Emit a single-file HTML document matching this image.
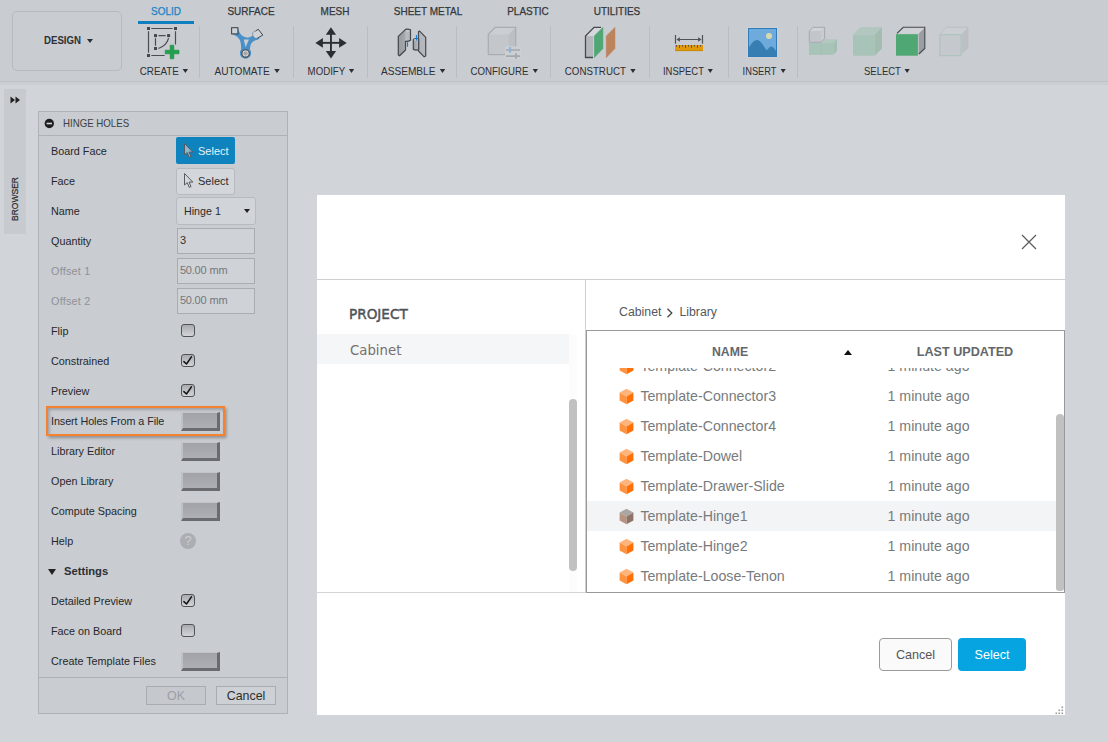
<!DOCTYPE html>
<html lang="en">
<head>
<meta charset="utf-8">
<title>Hinge Holes</title>
<style>
*{box-sizing:border-box;margin:0;padding:0}
html,body{width:1108px;height:742px;overflow:hidden}
body{background:#d1d4d9;font-family:"Liberation Sans",Arial,sans-serif;font-size:12px;color:#2b2b2b;position:relative}
.abs{position:absolute}
/* toolbar */
#toolbar{position:absolute;left:0;top:0;width:1108px;height:82px;background:#c9ccd1;border-bottom:1px solid #bec1c6}
#tbline{position:absolute;left:0;top:82px;width:1108px;height:3px;background:#cbced3}
.tab{position:absolute;top:4px;height:14px;line-height:14px;font-size:10.5px;color:#33363a;transform:translateX(-50%) scaleX(.95);white-space:nowrap;-webkit-text-stroke:.25px currentColor}
.tab.active{color:#1a84c4}
.grp{position:absolute;top:63.6px;height:14px;line-height:14px;font-size:11px;color:#2c2f33;transform:translateX(-50%) scaleX(.885);white-space:nowrap}
.grp i{display:inline-block;width:0;height:0;border-left:3.7px solid transparent;border-right:3.7px solid transparent;border-top:4.4px solid #2b2e33;margin-left:4.5px;vertical-align:1.4px}
.sep{position:absolute;top:26px;width:1.4px;height:51.5px;background:#babdc2;margin-left:-.2px}
.ico{position:absolute}
/* panel */
#panel{position:absolute;left:38px;top:111px;width:250px;height:603px;background:#c9ccd1;border:1px solid #aeb1b6}
#phead{position:absolute;left:0;top:0;width:248px;height:24px;border-bottom:1px solid #aeb1b6}
.lbl{position:absolute;left:12px;height:14px;line-height:14px;font-size:10.8px;color:#26282b;white-space:nowrap}
.lbl.dis{color:#8f9297;letter-spacing:.25px}
.cb{position:absolute;left:142.3px;width:13.3px;height:12.8px;border:1px solid #505357;border-radius:3px;background:linear-gradient(#a9abb0,#d2d4d8)}
.b3d{position:absolute;left:141.7px;width:39.2px;height:19.6px;background:linear-gradient(#a1a3a8,#adafb4);border-top:1.5px solid #c2c4c8;border-left:2px solid #bfc1c5;border-right:3px solid #696b6f;border-bottom:3px solid #696b6f;margin-top:-.5px}
.inp{position:absolute;left:138px;width:78px;height:26px;border:1px solid #a9acb1;background:#cfd2d6;font-size:11px;line-height:23px;padding-left:2px;color:#333}
.inp.dis{color:#74777c;letter-spacing:-.25px;word-spacing:.5px}
.cb svg{position:absolute;left:-1px;top:-1px;display:block}
/* dialog */
#dlg{position:absolute;left:317px;top:195px;width:748px;height:520px;background:#fff}
.row{position:absolute;left:0;width:468.5px;height:30px}
.row.sel{background:#f3f4f6}
.row .t{position:absolute;left:53.4px;top:5.8px;font-size:14.2px;line-height:18px;color:#787b7e;white-space:nowrap}
.row .d{position:absolute;left:300.5px;top:5.8px;font-size:14.2px;line-height:18px;color:#787b7e;white-space:nowrap}
.row svg{position:absolute;left:31.7px;top:6.9px;width:15px;height:16.8px}
.th{font-size:13px;font-weight:bold;line-height:16px;color:#64676b;white-space:nowrap}
</style>
</head>
<body>
<div id="toolbar"></div>
<div id="tbline"></div>

<!-- DESIGN -->
<div class="abs" style="left:11.5px;top:10.5px;width:110px;height:60.5px;border:1px solid #b7babf;border-radius:5px"></div>
<div class="abs" style="left:43.5px;top:33px;font-size:11.5px;font-weight:bold;color:#2e3135;line-height:14px;white-space:nowrap;transform-origin:0 50%;transform:scaleX(.84)">DESIGN</div>
<div class="abs" style="left:87px;top:38.5px;width:0;height:0;border-left:3px solid transparent;border-right:3px solid transparent;border-top:4px solid #2e2e2e"></div>

<!-- tabs -->
<div class="tab active" style="left:166px">SOLID</div>
<div class="abs" style="left:138.3px;top:20.5px;width:56px;height:3px;background:#0f7fbf"></div>
<div class="tab" style="left:251px">SURFACE</div>
<div class="tab" style="left:335px">MESH</div>
<div class="tab" style="left:427.5px">SHEET METAL</div>
<div class="tab" style="left:527.5px">PLASTIC</div>
<div class="tab" style="left:616.5px">UTILITIES</div>

<!-- group labels -->
<div class="grp" style="left:164.1px;transform:translateX(-50%) scaleX(0.895)">CREATE<i></i></div>
<div class="grp" style="left:246.8px;transform:translateX(-50%) scaleX(0.918)">AUTOMATE<i></i></div>
<div class="grp" style="left:331.1px;transform:translateX(-50%) scaleX(0.879)">MODIFY<i></i></div>
<div class="grp" style="left:413.3px;transform:translateX(-50%) scaleX(0.919)">ASSEMBLE<i></i></div>
<div class="grp" style="left:503.8px;transform:translateX(-50%) scaleX(0.876)">CONFIGURE<i></i></div>
<div class="grp" style="left:599.8px;transform:translateX(-50%) scaleX(0.885)">CONSTRUCT<i></i></div>
<div class="grp" style="left:688px;transform:translateX(-50%) scaleX(0.86)">INSPECT<i></i></div>
<div class="grp" style="left:763.9px;transform:translateX(-50%) scaleX(0.845)">INSERT<i></i></div>
<div class="grp" style="left:886.6px;transform:translateX(-50%) scaleX(0.862)">SELECT<i></i></div>

<div class="sep" style="left:199px"></div>
<div class="sep" style="left:293px"></div>
<div class="sep" style="left:367px"></div>
<div class="sep" style="left:456px"></div>
<div class="sep" style="left:550px"></div>
<div class="sep" style="left:649px"></div>
<div class="sep" style="left:728px"></div>
<div class="sep" style="left:797px"></div>

<!-- ICONS -->
<svg class="abs" style="left:0;top:0" width="1108" height="82" viewBox="0 0 1108 82">
<!-- CREATE -->
<g fill="#44474c">
<rect x="147" y="27" width="3" height="3"/><rect x="174" y="27" width="3" height="3"/><rect x="147" y="54" width="3" height="3"/>
<rect x="154" y="34.1" width="3" height="3"/><rect x="167.1" y="34.1" width="3" height="3"/><rect x="154" y="47" width="3" height="3"/>
</g>
<g fill="none" stroke="#4a4d52" stroke-width="1.2">
<path d="M151.3 28.5H172.7M148.5 31.2V52.8M175.5 31.2V44.6M151.3 55.5H164.7"/>
<path d="M158.4 35.6H165.6M155.5 38.2V45.8M168.6 38.2Q166.5 46 158.4 48.5"/>
</g>
<path d="M170.2 45.2H173.8V50.2H179V53.8H173.8V58.8H170.2V53.8H165.2V50.2H170.2Z" fill="#22a04e" stroke="#1b8c42" stroke-width=".6"/>
<!-- AUTOMATE -->
<path d="M232.3 34.3L238.4 29Q239.5 35.8 246.6 37.6Q250 38 252.8 35.5L259.9 38.2L257.5 39.8C251.5 41 250.3 44 249.9 49.6A5.6 5.6 0 1 1 241.1 49.6C241.3 42 240.5 37 232.3 34.3Z" fill="#4a90c8"/>
<path d="M243.7 39.6H249L245.6 47.2Z" fill="#c9ccd1"/>
<rect x="231.6" y="27.7" width="6.3" height="6.2" fill="#d0d3d7" stroke="#44474c" stroke-width="1.1"/>
<path d="M258.3 29.3L262.8 35.1L257.3 38.2A3.6 3.6 0 0 1 254.3 32Z" fill="#d0d3d7"/>
<path d="M255.5 31L258.3 29.3L262.8 35.1L257.3 38.2" fill="none" stroke="#44474c" stroke-width="1" stroke-linejoin="round"/>
<path d="M257.3 38.2A3.6 3.6 0 0 1 255.5 31" fill="none" stroke="#6f8499" stroke-width=".7"/>
<circle cx="245.6" cy="53.4" r="3.7" fill="#d0d3d7" stroke="#44474c" stroke-width="1.1"/>
<circle cx="245.6" cy="53.4" r="1.5" fill="none" stroke="#7d8187" stroke-width=".6"/>
<path d="M245.6 51.6V55.2M243.8 53.4H247.4" stroke="#8d9197" stroke-width=".5"/>
<!-- MODIFY -->
<g fill="#2b2e33">
<rect x="330" y="33" width="1.9" height="20"/><rect x="321" y="41.9" width="20" height="1.9"/>
<path d="M330.95 27.2L336.1 34.7H325.8Z"/><path d="M330.95 58.6L336.1 51.1H325.8Z"/>
<path d="M315.4 42.9L322.9 38.1V47.7Z"/><path d="M346.7 42.9L339.1 38.1V47.7Z"/>
</g>
<!-- ASSEMBLE -->
<defs>
<linearGradient id="ga" x1="0" y1="0" x2="1" y2="0"><stop offset="0" stop-color="#96999e"/><stop offset=".57" stop-color="#a6a9ae"/><stop offset=".6" stop-color="#b9bcc0"/><stop offset="1" stop-color="#b2b5b9"/></linearGradient>
<linearGradient id="gb" x1="0" y1="0" x2="1" y2="0"><stop offset="0" stop-color="#999ca1"/><stop offset="1" stop-color="#b9bcc0"/></linearGradient>
</defs>
<path d="M398.3 36.4L405.6 29.4Q408 28.6 410.5 29.8V40.2Q408 41.8 405.5 41.3V50L399.6 55.8L398.3 54.9Z" fill="url(#ga)" stroke="#45484d" stroke-width="1.2" stroke-linejoin="round"/>
<ellipse cx="407.9" cy="30.9" rx="1.5" ry=".6" fill="#d5d7da"/>
<path d="M407.5 42.2V46.8" stroke="#1a7fd0" stroke-width="1.2"/>
<path d="M418.5 38V31.5L419.6 31.2L425.7 37.3V56L424.2 56.8L418.5 51Z" fill="#b4b7bb" stroke="#45484d" stroke-width="1.2" stroke-linejoin="round"/>
<path d="M413.3 39.6Q416 37.6 418.7 39.2V49.6Q416 50.6 413.3 49.4Z" fill="url(#gb)" stroke="#45484d" stroke-width="1.2" stroke-linejoin="round"/>
<ellipse cx="416" cy="39.8" rx="2.2" ry=".9" fill="#c9ccd0"/>
<path d="M416.5 35V40.6" stroke="#1a7fd0" stroke-width="1.2"/>
<!-- CONFIGURE -->
<path d="M489 34.6L495.6 28H515V47.5L508.6 54H489Z" fill="#c3c6cb"/>
<path d="M489 34.6L495.6 28H515L508.6 34.6Z" fill="#cbced2"/>
<path d="M508.6 34.6L515 28V47.5L508.6 54Z" fill="#bcbfc4"/>
<path d="M488.3 54.6V34.3L495.2 27.3H515.7V47.6" fill="none" stroke="#a9acb1" stroke-width="1.2"/>
<path d="M488.3 54.6H505" stroke="#a9acb1" stroke-width="1.2"/>
<rect x="505" y="46.3" width="16" height="13.2" fill="#cdd0d4" opacity=".85"/>
<path d="M506 50H520M506 56.1H520" stroke="#a4a7ac" stroke-width="1.7"/>
<rect x="509.1" y="47.1" width="2" height="5.7" fill="#8db4d4"/>
<rect x="515.2" y="53.1" width="1.7" height="5.7" fill="#a4a7ac"/>
<!-- CONSTRUCT -->
<path d="M586.2 36.1L594 28H601.2L593.4 36.1Z" fill="#d4d7db"/>
<rect x="586.2" y="36.1" width="7" height="21" fill="#b3b6bb"/>
<path d="M593.2 36.1H594.3V57.5H593.2Z" fill="#d6d9dc"/>
<path d="M601 27.4H594L585.5 36.1V57.5H593" fill="none" stroke="#45484d" stroke-width="1.3"/>
<path d="M594.3 36.1L602.9 27.4V48.5L594.3 57.6Z" fill="#4fa874" stroke="#45a06c" stroke-width=".5"/>
<path d="M606.3 36.1L614.9 27.4V48.5L606.3 57.6Z" fill="#bd845c" stroke="#b47c54" stroke-width=".5"/>
<!-- INSPECT -->
<path d="M675.5 35V43.8M702.5 35V43.8M678 39.5H700" stroke="#50545a" stroke-width="1.2" fill="none"/>
<path d="M676.4 39.5L679.9 37.2V41.8Z M701.6 39.5L698.1 37.2V41.8Z" fill="#50545a"/>
<rect x="675" y="45" width="28" height="6" fill="#e09a0c"/>
<rect x="675" y="50.2" width="28" height=".9" fill="#c78608"/>
<path d="M676.5 45V46.7M679.5 45V47.9M682.5 45V46.7M685.5 45V47.9M688.5 45V46.7M691.5 45V47.9M694.5 45V46.7M697.5 45V47.9M700.5 45V46.7" stroke="#5f5640" stroke-width="1"/>
<!-- INSERT -->
<rect x="747.6" y="27.6" width="29.8" height="29.8" fill="#d6d9dd"/>
<rect x="748.5" y="28.5" width="28" height="28" fill="#6eabdc" stroke="#2f7cb8" stroke-width="1"/>
<circle cx="769" cy="35.9" r="3" fill="#d8d9ae"/>
<path d="M749 47.2Q753.5 40 756.7 40Q760 40 763 45Q765.5 49 766.6 50Q768 49.5 769 47.8Q770.5 46.2 771.8 46.4Q774 47 776 51V56H749Z" fill="#377fb3"/>
<!-- SELECT 1 -->
<path d="M808.9 42.7H833.3V54.9H808.9Z" fill="#a8c3b8"/>
<path d="M821.4 42.7L824.6 39.2H837L833.3 42.7Z" fill="#b2c9bf"/>
<path d="M833.3 42.7L837 39.2V50.9L833.3 54.9Z" fill="#a3bfb3"/>
<path d="M821.4 42.7V54.9" stroke="#a2beb2" stroke-width=".6"/>
<path d="M809.3 31L813 27.3H824.6V38.7L821 42.3H809.3Z" fill="#c8cbcf"/>
<rect x="809.3" y="31" width="11.7" height="11.3" fill="#c2c5ca"/>
<path d="M809.3 31L813 27.3H824.6L821 31Z" fill="#cfd2d6"/>
<path d="M809.3 31L813 27.3H824.6V38.7L821 42.3H809.3Z" fill="none" stroke="#a5a8ad" stroke-width="1"/>
<!-- SELECT 2 -->
<rect x="853" y="34.8" width="21.7" height="20.9" fill="#a8c3b8"/>
<path d="M853 34.8L860.5 27.1H881.9L874.7 34.8Z" fill="#b1c7bf"/>
<path d="M874.7 34.8L881.9 27.1V48.4L874.7 55.7Z" fill="#a2bcb0"/>
<!-- SELECT 3 -->
<path d="M897 33.6L903.3 27.3H924.8L918.7 33.6Z" fill="#ced1d5"/>
<path d="M918.7 33.8L924.8 27.7V48.4L918.7 54.1Z" fill="#9a9da2"/>
<rect x="896" y="34.2" width="21.9" height="21.5" fill="#4fa874"/>
<path d="M897 33.4L903.3 27.3H924.8V48.4L918.9 54" fill="none" stroke="#45484d" stroke-width="1.1"/>
<!-- SELECT 4 -->
<path d="M940.2 33.6L946.3 27.3H967.9L961.8 33.6Z" fill="#cbced2"/>
<path d="M961.8 33.8L967.9 27.7V48.4L961.8 54.1Z" fill="#bcc0c4"/>
<path d="M940.4 33.4L946.3 27.3H967.9V48.4" fill="none" stroke="#b9bcc0" stroke-width=".8"/>
<rect x="939.8" y="34.7" width="21.2" height="21" fill="#c5c8cc" stroke="#a9c4b8" stroke-width="1"/>
</svg>


<!-- browser tab -->
<div class="abs" style="left:4px;top:89px;width:22px;height:145px;background:#c7cacf"></div>
<div class="abs" style="left:10px;top:96px;width:12px;height:8px"><svg style="display:block" width="12" height="8" viewBox="0 0 12 8"><path d="M0.5 0.5L5 4L0.5 7.5Z M5.5 0.5L10 4L5.5 7.5Z" fill="#222"/></svg></div>
<div class="abs" style="left:15px;top:199px;width:0;height:0"><div style="position:absolute;transform:translate(-50%,-50%) rotate(-90deg);font-size:8.5px;color:#2a2a2a;white-space:nowrap;-webkit-text-stroke:.2px #2a2a2a">BROWSER</div></div>

<!-- PANEL -->
<div id="panel">
 <div id="phead">
  <svg class="abs" style="left:5px;top:6px" width="11" height="11" viewBox="0 0 11 11"><circle cx="5.3" cy="5.5" r="4.7" fill="#1e1e1e"/><rect x="2.6" y="4.7" width="5.4" height="1.6" fill="#d5d8dc"/></svg>
  <div class="abs" style="left:24px;top:4px;font-size:11px;line-height:14px;color:#3c3f43;white-space:nowrap;transform-origin:0 50%;transform:scaleX(.88)">HINGE HOLES</div>
 </div>
 <!-- rows: row center y (abs) = 151 + 30*i ; panel-top=111 => rel center 40+30*i -->
 <div class="lbl" style="top:32px">Board Face</div>
 <div class="abs" style="left:137px;top:25px;width:58.5px;height:27.4px;background:#0e83be;border-radius:2px"></div>
 <svg class="abs" style="left:144px;top:30px" width="12" height="18" viewBox="0 0 12 18"><path d="M1.5 1.5L1.5 13L4.2 10.6L6.3 15.4L8 14.6L6 10.1L9.8 10.1Z" fill="#8fb6cf" stroke="#565b60" stroke-width="1" stroke-linejoin="round"/></svg>
 <div class="abs" style="left:159px;top:32px;font-size:11px;line-height:14px;color:#e8f2f8">Select</div>

 <div class="lbl" style="top:62px">Face</div>
 <div class="abs" style="left:137px;top:55.5px;width:58.5px;height:27px;background:#d3d6da;border:1.5px solid #b7babf;border-radius:3px"></div>
 <svg class="abs" style="left:144px;top:60px" width="12" height="18" viewBox="0 0 12 18"><path d="M1.5 1.5L1.5 13L4.2 10.6L6.3 15.4L8 14.6L6 10.1L9.8 10.1Z" fill="#d6d9dd" stroke="#565b60" stroke-width="1" stroke-linejoin="round"/></svg>
 <div class="abs" style="left:159px;top:62px;font-size:11px;line-height:14px;color:#2b2b2b">Select</div>

 <div class="lbl" style="top:92px">Name</div>
 <div class="abs" style="left:137px;top:85px;width:79.5px;height:27.5px;background:#d1d4d8;border:1.5px solid #b7babf;border-radius:3px"></div>
 <div class="abs" style="left:145px;top:92px;font-size:10.7px;line-height:14px;color:#2b2b2b;white-space:nowrap">Hinge 1</div>
 <div class="abs" style="left:205px;top:97.3px;width:0;height:0;border-left:3px solid transparent;border-right:3px solid transparent;border-top:4px solid #222"></div>

 <div class="lbl" style="top:122px">Quantity</div>
 <div class="inp" style="top:116px">3</div>
 <div class="lbl dis" style="top:152px">Offset 1</div>
 <div class="inp dis" style="top:146px">50.00 mm</div>
 <div class="lbl dis" style="top:182px">Offset 2</div>
 <div class="inp dis" style="top:176px">50.00 mm</div>

 <div class="lbl" style="top:212px">Flip</div>
 <div class="cb" style="top:212px"></div>
 <div class="lbl" style="top:242px">Constrained</div>
 <div class="cb" style="top:242px"><svg width="14" height="13" viewBox="0 0 14 13"><path d="M2.9 7.6L5.5 10L10.4 2.8" fill="none" stroke="#111" stroke-width="1.5" stroke-linecap="round" stroke-linejoin="round"/></svg></div>
 <div class="lbl" style="top:272px">Preview</div>
 <div class="cb" style="top:272px"><svg width="14" height="13" viewBox="0 0 14 13"><path d="M2.9 7.6L5.5 10L10.4 2.8" fill="none" stroke="#111" stroke-width="1.5" stroke-linecap="round" stroke-linejoin="round"/></svg></div>

 <div class="abs" style="left:7px;top:294px;width:179px;height:30px;border:2.8px solid #f5822f;box-shadow:1.5px 2px 3px rgba(0,0,0,.3),inset 1.5px 2px 3px rgba(0,0,0,.22)"></div>
 <div class="lbl" style="top:302px;letter-spacing:-.08px">Insert Holes From a File</div>
 <div class="b3d" style="top:300px"></div>
 <div class="lbl" style="top:332px">Library Editor</div>
 <div class="b3d" style="top:330px"></div>
 <div class="lbl" style="top:362px">Open Library</div>
 <div class="b3d" style="top:360px"></div>
 <div class="lbl" style="top:392px">Compute Spacing</div>
 <div class="b3d" style="top:390px"></div>
 <div class="lbl" style="top:422px">Help</div>
 <div class="abs" style="left:141px;top:421px;width:16px;height:16px;border-radius:50%;background:#abaeb3;color:#ccd0d4;font-size:13px;line-height:16.5px;text-align:center">?</div>

 <div class="abs" style="left:8.6px;top:456.6px;width:0;height:0;border-left:4.7px solid transparent;border-right:4.7px solid transparent;border-top:6.6px solid #222"></div>
 <div class="abs" style="left:25px;top:452px;font-size:11.2px;font-weight:bold;line-height:14px;color:#2b2e33">Settings</div>

 <div class="lbl" style="top:482px">Detailed Preview</div>
 <div class="cb" style="top:482px"><svg width="14" height="13" viewBox="0 0 14 13"><path d="M2.9 7.6L5.5 10L10.4 2.8" fill="none" stroke="#111" stroke-width="1.5" stroke-linecap="round" stroke-linejoin="round"/></svg></div>
 <div class="lbl" style="top:512px">Face on Board</div>
 <div class="cb" style="top:512px"></div>
 <div class="lbl" style="top:542px">Create Template Files</div>
 <div class="b3d" style="top:540px"></div>

 <div class="abs" style="left:0;top:565px;width:248px;height:1px;background:#aeb1b6"></div>
 <div class="abs" style="left:107px;top:574px;width:60px;height:19px;border:1px solid #a9acb1;background:#c5c8cd;font-size:12.4px;line-height:18.6px;text-align:center;color:#9da0a5">OK</div>
 <div class="abs" style="left:177px;top:574px;width:60px;height:19px;border:1px solid #a9acb1;background:#cdd0d4;font-size:12.4px;line-height:18.6px;text-align:center;color:#2e2e2e">Cancel</div>
</div>

<!-- DIALOG -->
<div id="dlg">
 <svg class="abs" style="left:704px;top:39px" width="16" height="16" viewBox="0 0 16 16"><path d="M1 1L15 15M15 1L1 15" stroke="#5a5a5a" stroke-width="1.2" fill="none"/></svg>
 <div class="abs" style="left:0;top:84px;width:748px;height:1px;background:#cfcfcf"></div>
 <div class="abs" style="left:268px;top:85px;width:1px;height:312px;background:#cfcfcf"></div>
 <div class="abs" style="left:0;top:397px;width:269px;height:1px;background:#d4d4d4"></div>
 <div class="abs" style="left:32px;top:110px;font-family:'DejaVu Sans','Liberation Sans',sans-serif;font-size:13.6px;line-height:18px;color:#4f5358;-webkit-text-stroke:.45px #4f5358;white-space:nowrap">PROJECT</div>
 <div class="abs" style="left:0;top:139px;width:252px;height:30px;background:#f4f6f8"></div>
 <div class="abs" style="left:252px;top:139px;width:8px;height:258px;background:#fcfcfd"></div>
 <div class="abs" style="left:252px;top:204px;width:8px;height:172px;background:#c1c1c1;border-radius:4px"></div>
 <div class="abs" style="left:33px;top:146.8px;font-family:'DejaVu Sans','Liberation Sans',sans-serif;font-size:13.3px;line-height:18px;color:#77706e;white-space:nowrap">Cabinet</div>
 <div class="abs" style="left:302px;top:109px;font-size:12.3px;line-height:16px;color:#55585c;white-space:nowrap">Cabinet<svg width="8" height="10" viewBox="0 0 8 10" style="margin:0 5px 0 5px;vertical-align:-1.5px"><path d="M1.5 0.8L5.8 5L1.5 9.2" fill="none" stroke="#444" stroke-width="1.3"/></svg>Library</div>
 <!-- table -->
 <div id="tbl" class="abs" style="left:269px;top:135px;width:479px;height:263px;border:1px solid #999;overflow:hidden">
  <div class="abs" style="left:0;top:0;width:477px;height:261px;overflow:hidden">
  <div class="row" style="top:20px"><svg width="15" height="16" viewBox="0 0 15 16"><path d="M7.5 0.3L14.4 4.1L7.5 8L0.6 4.1Z" fill="#ffb47c"/><path d="M0.6 4.1L7.5 8L7.5 15.8L0.6 12Z" fill="#ff9340"/><path d="M14.4 4.1L7.5 8L7.5 15.8L14.4 12Z" fill="#ff6f05"/></svg><span class="t">Template-Connector2</span><span class="d">1 minute ago</span></div>
  <div class="row" style="top:50px"><svg width="15" height="16" viewBox="0 0 15 16"><path d="M7.5 0.3L14.4 4.1L7.5 8L0.6 4.1Z" fill="#ffb47c"/><path d="M0.6 4.1L7.5 8L7.5 15.8L0.6 12Z" fill="#ff9340"/><path d="M14.4 4.1L7.5 8L7.5 15.8L14.4 12Z" fill="#ff6f05"/></svg><span class="t">Template-Connector3</span><span class="d">1 minute ago</span></div>
  <div class="row" style="top:80px"><svg width="15" height="16" viewBox="0 0 15 16"><path d="M7.5 0.3L14.4 4.1L7.5 8L0.6 4.1Z" fill="#ffb47c"/><path d="M0.6 4.1L7.5 8L7.5 15.8L0.6 12Z" fill="#ff9340"/><path d="M14.4 4.1L7.5 8L7.5 15.8L14.4 12Z" fill="#ff6f05"/></svg><span class="t">Template-Connector4</span><span class="d">1 minute ago</span></div>
  <div class="row" style="top:110px"><svg width="15" height="16" viewBox="0 0 15 16"><path d="M7.5 0.3L14.4 4.1L7.5 8L0.6 4.1Z" fill="#ffb47c"/><path d="M0.6 4.1L7.5 8L7.5 15.8L0.6 12Z" fill="#ff9340"/><path d="M14.4 4.1L7.5 8L7.5 15.8L14.4 12Z" fill="#ff6f05"/></svg><span class="t">Template-Dowel</span><span class="d">1 minute ago</span></div>
  <div class="row" style="top:140px"><svg width="15" height="16" viewBox="0 0 15 16"><path d="M7.5 0.3L14.4 4.1L7.5 8L0.6 4.1Z" fill="#ffb47c"/><path d="M0.6 4.1L7.5 8L7.5 15.8L0.6 12Z" fill="#ff9340"/><path d="M14.4 4.1L7.5 8L7.5 15.8L14.4 12Z" fill="#ff6f05"/></svg><span class="t">Template-Drawer-Slide</span><span class="d">1 minute ago</span></div>
  <div class="row sel" style="top:170px"><svg width="15" height="16" viewBox="0 0 15 16"><path d="M7.5 0.3L14.4 4.1L7.5 8L0.6 4.1Z" fill="#a9a6a4"/><path d="M0.6 4.1L7.5 8L7.5 15.8L0.6 12Z" fill="#b89480"/><path d="M14.4 4.1L7.5 8L7.5 15.8L14.4 12Z" fill="#8c7568"/></svg><span class="t">Template-Hinge1</span><span class="d">1 minute ago</span></div>
  <div class="row" style="top:200px"><svg width="15" height="16" viewBox="0 0 15 16"><path d="M7.5 0.3L14.4 4.1L7.5 8L0.6 4.1Z" fill="#ffb47c"/><path d="M0.6 4.1L7.5 8L7.5 15.8L0.6 12Z" fill="#ff9340"/><path d="M14.4 4.1L7.5 8L7.5 15.8L14.4 12Z" fill="#ff6f05"/></svg><span class="t">Template-Hinge2</span><span class="d">1 minute ago</span></div>
  <div class="row" style="top:230px"><svg width="15" height="16" viewBox="0 0 15 16"><path d="M7.5 0.3L14.4 4.1L7.5 8L0.6 4.1Z" fill="#ffb47c"/><path d="M0.6 4.1L7.5 8L7.5 15.8L0.6 12Z" fill="#ff9340"/><path d="M14.4 4.1L7.5 8L7.5 15.8L14.4 12Z" fill="#ff6f05"/></svg><span class="t">Template-Loose-Tenon</span><span class="d">1 minute ago</span></div>
  </div>
  <div class="abs" style="left:0;top:0;width:477px;height:37.2px;background:#fff"></div>
  <div class="abs th" style="left:142.6px;top:13.2px;transform:translateX(-50%) scaleX(.945)">NAME</div>
  <div class="abs" style="left:257px;top:18.8px;width:0;height:0;border-left:4.8px solid transparent;border-right:4.8px solid transparent;border-bottom:5px solid #111"></div>
  <div class="abs th" style="left:377.5px;top:13.2px;transform:translateX(-50%) scaleX(.97)">LAST UPDATED</div>
  <div class="abs" style="left:468.5px;top:83px;width:8px;height:177px;background:#c1c1c1;border-radius:4px 4px 3px 3px"></div>
 </div>
 <div class="abs" style="left:562px;top:443px;width:73px;height:33px;border:1px solid #9a9a9a;border-radius:4px;background:#fafafa;font-size:12.6px;line-height:32.5px;text-align:center;color:#555">Cancel</div>
 <div class="abs" style="left:641px;top:443px;width:68px;height:33px;border-radius:4px;background:#06a5e1;font-size:12.6px;line-height:34.5px;text-align:center;color:#fff">Select</div>
 <svg class="abs" style="left:738px;top:511px" width="9" height="9" viewBox="0 0 9 9"><g fill="#9a9a9a"><rect x="6.5" y="0.5" width="1.6" height="1.6"/><rect x="3.5" y="3.5" width="1.6" height="1.6"/><rect x="6.5" y="3.5" width="1.6" height="1.6"/><rect x="0.5" y="6.5" width="1.6" height="1.6"/><rect x="3.5" y="6.5" width="1.6" height="1.6"/><rect x="6.5" y="6.5" width="1.6" height="1.6"/></g></svg>
</div>

</body>
</html>
